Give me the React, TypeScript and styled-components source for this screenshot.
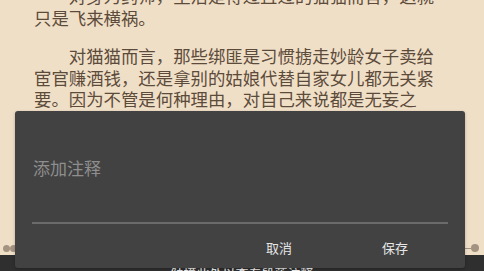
import React from "react";
import styled, { createGlobalStyle } from "styled-components";

const Global = createGlobalStyle`
  html, body { margin: 0; padding: 0; }
  body { background: #f0dfc7; overflow: hidden; }
  * { box-sizing: border-box; }
`;

const Page = styled.div`
  position: relative;
  width: 484px;
  height: 271px;
  display: flex;
  flex-direction: column;
  background: #f0dfc7;
  overflow: hidden;
  font-family: "Noto Sans CJK SC", "Noto Sans", sans-serif;
`;

const Reader = styled.div`
  flex: 1;
  overflow: hidden;
  padding-left: 34px;
`;

const Text = styled.div`
  width: 404px;
  margin-top: -15px;
  color: #5c4b3b;
  font-size: 17.4px;
  line-height: 21.5px;
`;

const Para = styled.p`
  margin: 0 0 17px 0;
  text-indent: 2em;
`;

const SliderRow = styled.div`
  height: 14px;
  display: flex;
  align-items: center;
  padding: 0 5px 0 3px;
`;

const Dot = styled.span<{ $size?: number }>`
  width: ${(p) => p.$size ?? 7}px;
  height: ${(p) => p.$size ?? 7}px;
  border-radius: 50%;
  background: #a59382;
  flex: none;
`;

const Track = styled.span`
  flex: 1;
  height: 1px;
  background: #a59382;
`;

const BottomBar = styled.div`
  height: 16px;
  background: #2f2f2f;
  display: flex;
  justify-content: center;
  align-items: flex-start;
  padding-top: 10px;
  color: #f2f2f2;
  font-size: 13px;
  line-height: 16px;
`;

const Dialog = styled.div`
  position: absolute;
  left: 15px;
  top: 111px;
  width: 450px;
  height: 157px;
  background: #424242;
  border-radius: 3px;
  display: flex;
  flex-direction: column;
  box-shadow: 0 1px 3px rgba(0, 0, 0, 0.25);
`;

const Field = styled.div`
  margin: 0 17px;
  height: 113px;
  border-bottom: 2px solid #6b6b6b;
  padding: 45px 0 0 1px;
  color: #8e8e8e;
  font-size: 17px;
  line-height: 24px;
`;

const Actions = styled.div`
  flex: 1;
  display: flex;
  justify-content: flex-end;
  align-items: center;
  padding: 2px 20px 0 0;
  gap: 16px;
`;

const Button = styled.button`
  width: 100px;
  height: 30px;
  background: transparent;
  border: none;
  color: #e6e6e6;
  font-family: "Noto Sans CJK SC", "Noto Sans", sans-serif;
  font-size: 13px;
  padding: 0;
`;

export default function App() {
  return (
    <>
      <Global />
      <Page>
        <Reader>
          <Text>
            <Para>对身为药师，生活是得过且过的猫猫而言，这就只是飞来横祸。</Para>
            <Para>
              对猫猫而言，那些绑匪是习惯掳走妙龄女子卖给宦官赚酒钱，还是拿别的姑娘代替自家女儿都无关紧要。因为不管是何种理由，对自己来说都是无妄之灾。
            </Para>
          </Text>
        </Reader>
        <SliderRow>
          <Dot />
          <Dot />
          <Track />
          <Dot $size={8} />
        </SliderRow>
        <BottomBar>触摸此处以查看段落注释</BottomBar>
        <Dialog>
          <Field>添加注释</Field>
          <Actions>
            <Button>取消</Button>
            <Button>保存</Button>
          </Actions>
        </Dialog>
      </Page>
    </>
  );
}
